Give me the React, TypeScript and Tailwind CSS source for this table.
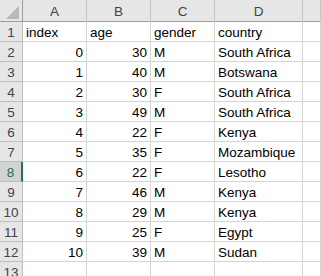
import React from 'react';

const rows: [number, number, string, string][] = [
  [0, 30, 'M', 'South Africa'],
  [1, 40, 'M', 'Botswana'],
  [2, 30, 'F', 'South Africa'],
  [3, 49, 'M', 'South Africa'],
  [4, 22, 'F', 'Kenya'],
  [5, 35, 'F', 'Mozambique'],
  [6, 22, 'F', 'Lesotho'],
  [7, 46, 'M', 'Kenya'],
  [8, 29, 'M', 'Kenya'],
  [9, 25, 'F', 'Egypt'],
  [10, 39, 'M', 'Sudan'],
];

const cols = 'grid grid-cols-[23px_64px_64px_64px_88px_1fr]';
const cell = 'h-[20px] border-r border-b border-[#d4d4d4] px-[3px] pt-[1px] leading-[20px] whitespace-nowrap overflow-hidden';
const rowHead = 'h-[20px] border-r border-b border-[#bdbdbd] bg-[#e6e6e6] pt-[1px] text-center leading-[20px] text-[#444]';

function Row({ n, vals, selected }: { n: number; vals: (string | number)[]; selected?: boolean }) {
  return (
    <div className={cols}>
      {selected ? (
        <div className="h-[20px] border-r-2 border-r-[#217346] border-b border-b-[#bdbdbd] bg-[#d2d2d2] pt-[1px] text-center leading-[20px] text-[#217346]">{n}</div>
      ) : (
        <div className={rowHead}>{n}</div>
      )}
      {vals.map((v, i) => (
        <div key={i} className={`${cell} ${typeof v === 'number' ? 'text-right' : 'text-left'}`}>
          {v}
        </div>
      ))}
      <div className={cell}></div>
    </div>
  );
}

export default function App() {
  return (
    <div className="w-[321px] h-[276px] overflow-hidden bg-white text-[13.5px] text-black" style={{ fontFamily: '"Liberation Sans", Arial, sans-serif' }}>
      <div className={`${cols} h-[22px] bg-[#e6e6e6] border-b border-[#9b9b9b] text-[#444]`}>
        <div className="relative border-r border-[#9b9b9b]">
          <div className="absolute right-[3px] bottom-[3px] w-0 h-0 border-l-[13px] border-l-transparent border-b-[13px] border-b-[#b8b8b8]" />
        </div>
        {['A', 'B', 'C', 'D', ''].map((c, i) => (
          <div key={i} className="border-r border-[#c6c6c6] pt-[1px] text-center leading-[21px]">{c}</div>
        ))}
      </div>
      <Row n={1} vals={['index', 'age', 'gender', 'country']} />
      {rows.map((r, i) => (
        <Row key={i} n={i + 2} vals={r} selected={i + 2 === 8} />
      ))}
      <Row n={13} vals={['', '', '', '']} />
    </div>
  );
}
